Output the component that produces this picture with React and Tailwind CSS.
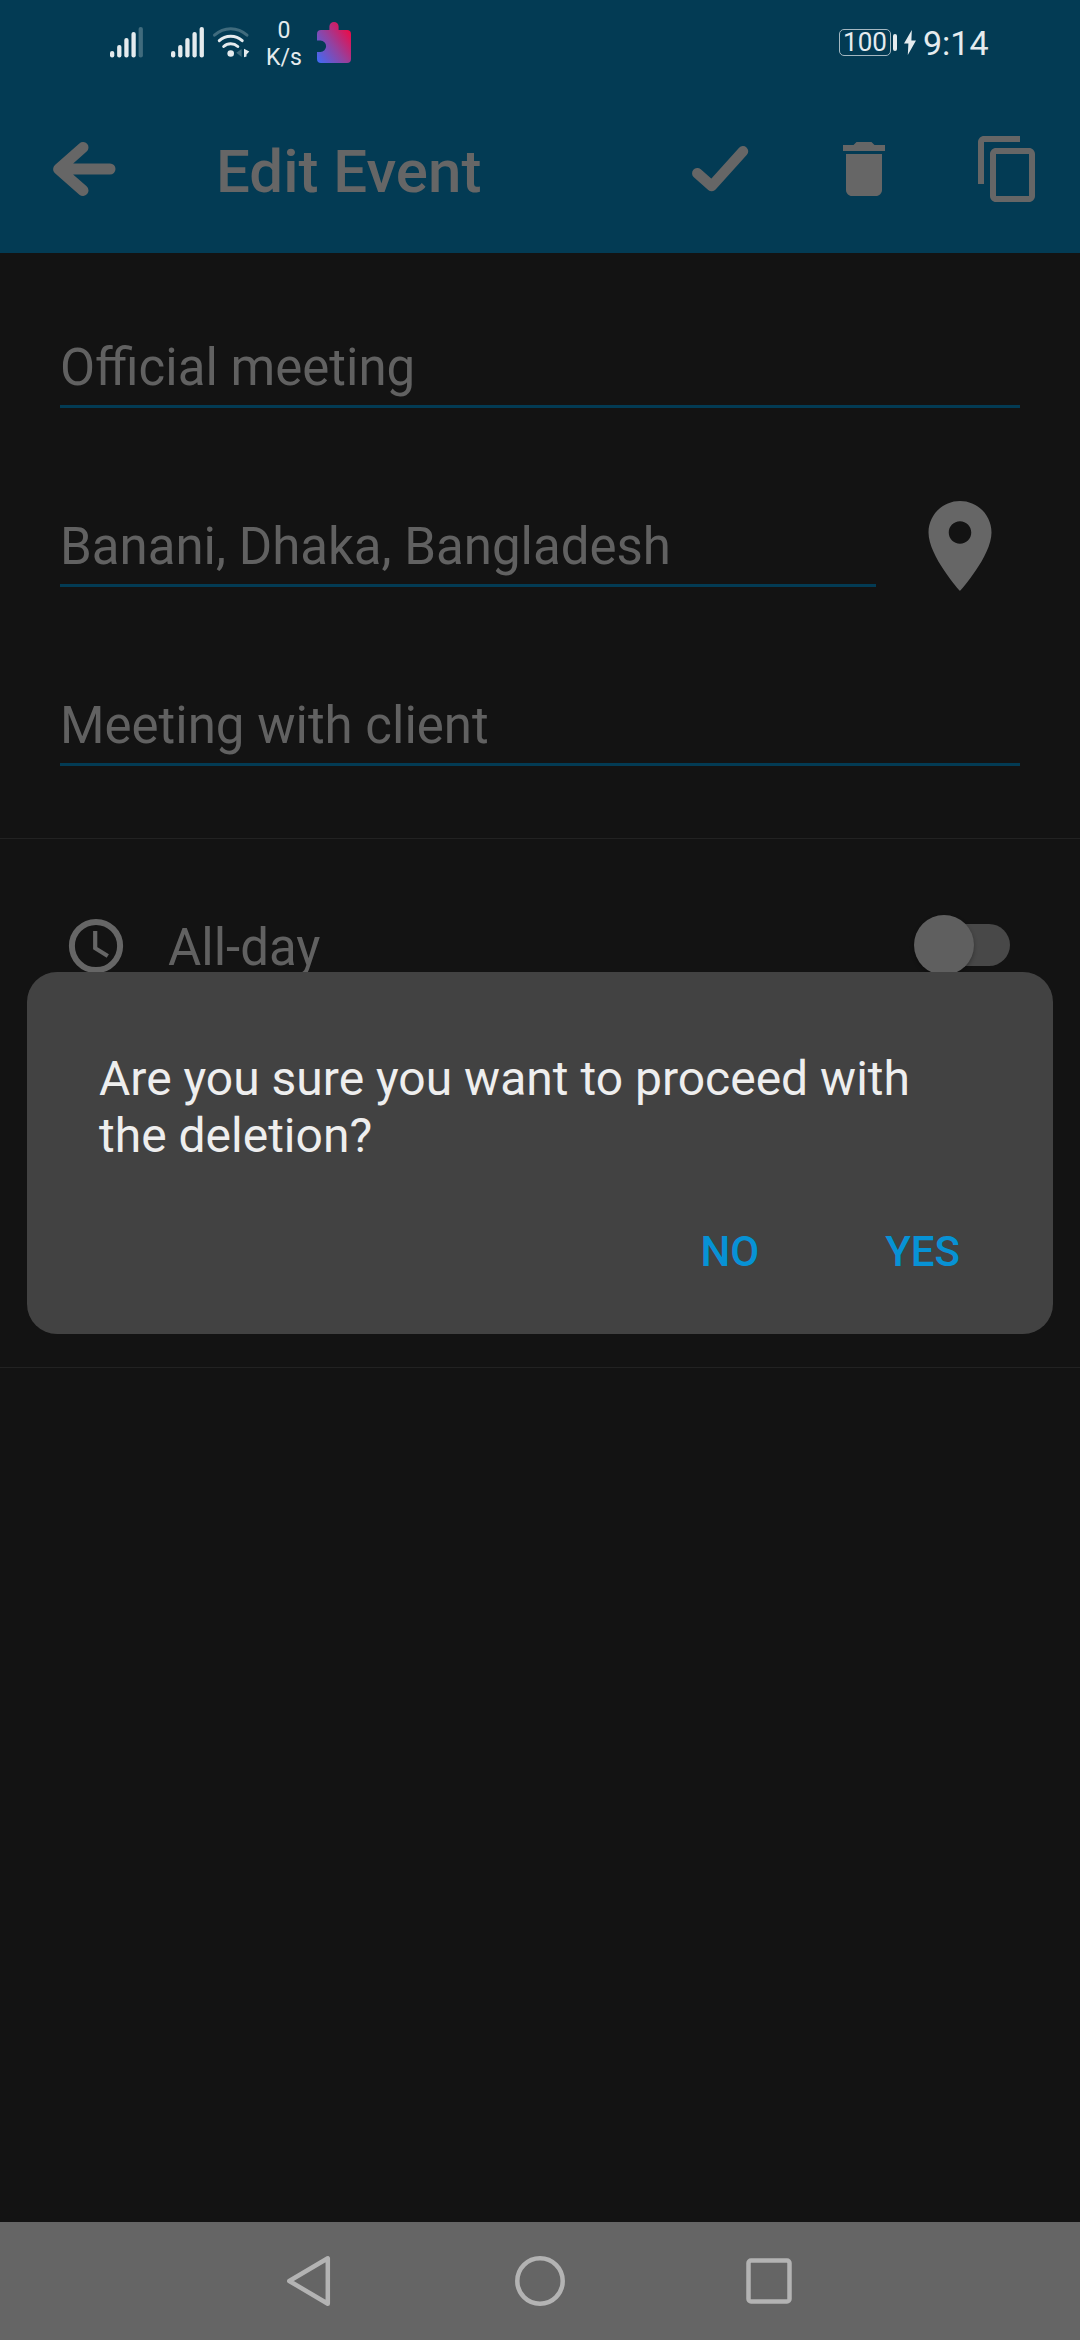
const SIGNAL_TOPS = [24, 18, 11, 5, 0];

function Signal({ level, className }) {
  return (
    <svg className={className} width="33" height="31" viewBox="0 0 33 31" fill="#e5ebee">
      {SIGNAL_TOPS.map((top, i) => (
        <rect key={top} x={i * 7.15} y={top} width="4.3" height={30.5 - top} rx="2.1" opacity={i < level ? 1 : 0.27} />
      ))}
    </svg>
  );
}

function Wifi() {
  return (
    <svg className="ml-[8px]" width="38" height="32" viewBox="0 0 38 32" fill="none" stroke="#e5ebee" strokeWidth="3" strokeLinecap="round">
      <path d="M2.5 9.2Q9.5 2.7 18.7 2.7T35 9.2" opacity="0.27" />
      <path d="M7.3 14.7Q12 10.2 18.7 10.2T30.2 14.7" />
      <path d="M11.7 20.5Q14.6 17.8 18.7 17.8T25.8 20.5" />
      <circle cx="18.7" cy="27.5" r="3.3" fill="#e5ebee" stroke="none" />
      <path d="M24.3 26.8L29.6 23v8z" fill="#e5ebee" stroke="none" opacity="0.27" />
      <path d="M32 22.7L37.3 25.6 34.5 28.5V30.5L32 31.3z" fill="#e5ebee" stroke="none" />
    </svg>
  );
}

function Puzzle() {
  return (
    <svg className="ml-[16px]" width="34" height="41" viewBox="0 0 34 41">
      <defs>
        <linearGradient id="puzzle" x1="0" y1="1" x2="1" y2="0.15">
          <stop offset="0" stopColor="#3d6cf8" />
          <stop offset="0.5" stopColor="#94419f" />
          <stop offset="1" stopColor="#f5063f" />
        </linearGradient>
      </defs>
      <path
        fill="url(#puzzle)"
        d="M4 8H12.4V4.6a4.6 4.6 0 0 1 9.2 0V8H30a4 4 0 0 1 4 4v25a4 4 0 0 1-4 4H4a4 4 0 0 1-4-4V30H3.4a5.7 5.7 0 0 0 0-11.4H0V12a4 4 0 0 1 4-4z"
      />
    </svg>
  );
}

function StatusBar() {
  return (
    <div className="flex h-[85px] items-start text-[#e5ebee]">
      <Signal level={4} className="ml-[110px] mt-[27px]" />
      <Signal level={5} className="ml-[28px] mt-[27px]" />
      <div className="mt-[26px]">
        <Wifi />
      </div>
      <div className="ml-[16px] mt-[17px] w-[36px] text-center text-[23px] leading-[27px]">
        <div>0</div>
        <div>K/s</div>
      </div>
      <div className="mt-[22px] -ml-[1px]">
        <Puzzle />
      </div>
      <div className="ml-auto mt-[29px] flex h-[27px] w-[52px] items-center justify-center rounded-[5px] border border-[#a4b7c1] text-[26px] leading-[27px]">
        100
      </div>
      <div className="ml-[2px] mt-[34px] h-[17px] w-[4px] rounded-[2px] bg-[#e5ebee]" />
      <svg className="ml-[7px] mt-[30px]" width="12" height="25" viewBox="0 0 12 25" fill="#e5ebee">
        <path d="M7.8 0L0 13.6H4.4L3.8 25 12 10.6H7.4z" />
      </svg>
      <div className="ml-[7px] mr-[91px] mt-[23px] w-[66px] whitespace-nowrap text-[34px] leading-[40px]">9:14</div>
    </div>
  );
}

function AppBar() {
  return (
    <div className="flex h-[168px] items-center text-[#666666]">
      <svg className="ml-[48px]" width="72" height="72" viewBox="0 0 72 72" fill="none" stroke="currentColor" strokeWidth="11" strokeLinecap="round" strokeLinejoin="round">
        <path d="M62 36H11M35 14.5L10.6 36.2 35 57.5" />
      </svg>
      <h1 className="ml-[96px] grow pt-[5px] text-[60px] font-medium leading-[72px]">Edit Event</h1>
      <svg width="72" height="72" viewBox="0 0 72 72" fill="none" stroke="currentColor" strokeWidth="10.5" strokeLinecap="round" strokeLinejoin="round">
        <path d="M13.3 40.3L27.7 53 59 18.3" />
      </svg>
      <svg className="ml-[72px]" width="72" height="72" viewBox="0 0 24 24" fill="currentColor">
        <path d="M6 19c0 1.100.9 2 2 2h8c1.100 0 2-.9 2-2V7H6v12zM19 4h-3.500l-1-1h-5l-1 1H5v2h14V4z" />
      </svg>
      <svg className="ml-[72px] mr-[36px]" width="72" height="72" viewBox="0 0 24 24" fill="currentColor">
        <path d="M16 1H4c-1.100 0-2 .9-2 2v14h2V3h12V1zm3 4H8c-1.100 0-2 .9-2 2v14c0 1.100.9 2 2 2h11c1.100 0 2-.9 2-2V7c0-1.100-.9-2-2-2zm0 16H8V7h11v14z" />
      </svg>
    </div>
  );
}

function Field({ children }) {
  return <div className="h-[70px] grow border-b-[3px] border-[#033b54] text-[51px] leading-[60px]">{children}</div>;
}

function Toggle() {
  return (
    <div className="flex h-[60px] w-[96px] items-center">
      <div className="z-10 h-[60px] w-[60px] shrink-0 rounded-full bg-[#5f5f5f] shadow-[0_2px_4px_rgba(0,0,0,0.3)]" />
      <div className="-ml-[40px] h-[42px] w-[76px] shrink-0 rounded-full bg-[#484848]" />
    </div>
  );
}

function EventForm() {
  return (
    <div className="grow text-[#616161]">
      <div className="flex h-[585px] flex-col gap-[109px] px-[60px] pt-[85px]">
        <div className="flex">
          <Field>Official meeting</Field>
        </div>
        <div className="flex h-[70px] items-start">
          <Field>Banani, Dhaka, Bangladesh</Field>
          <svg className="-mt-[25px] ml-[30px] mr-[6px] shrink-0 text-[#666666]" width="108" height="108" viewBox="0 0 24 24" fill="currentColor">
            <path d="M12 2C8.130 2 5 5.130 5 9c0 5.250 7 13 7 13s7-7.750 7-13c0-3.870-3.130-7-7-7zm0 9.500c-1.380 0-2.500-1.120-2.500-2.500s1.120-2.500 2.500-2.500 2.500 1.120 2.500 2.500-1.120 2.500-2.500 2.500z" />
          </svg>
        </div>
        <div className="flex">
          <Field>Meeting with client</Field>
        </div>
      </div>
      <div className="h-[530px] border-y border-[#222222] pt-[76px]">
        <div className="flex h-[60px] items-center pl-[66px] pr-[70px]">
          <svg width="60" height="60" viewBox="0 0 60 60" fill="none" stroke="#666666">
            <circle cx="30" cy="31" r="24.100" strokeWidth="6" />
            <path d="M29.200 16v17.200L41.800 41" strokeWidth="4.200" />
          </svg>
          <div className="ml-[42px] grow pt-[6px] text-[51px] leading-[60px]">All-day</div>
          <Toggle />
        </div>
      </div>
    </div>
  );
}

function NavBar() {
  return (
    <div className="flex h-[118px] items-center justify-center gap-[169px] bg-[#656565]">
      <svg width="60" height="60" viewBox="0 0 60 60" fill="none" stroke="#b3b3b3" strokeWidth="4.500" strokeLinejoin="round">
        <path d="M46.800 7.300v45.400L8.300 30z" />
      </svg>
      <svg width="60" height="60" viewBox="0 0 60 60" fill="none" stroke="#b3b3b3" strokeWidth="4.500">
        <circle cx="30" cy="30" r="22.700" />
      </svg>
      <svg width="60" height="60" viewBox="0 0 60 60" fill="none" stroke="#b3b3b3" strokeWidth="4.500">
        <rect x="9.500" y="9.500" width="41" height="41" rx="2.500" />
      </svg>
    </div>
  );
}

function DeleteDialog() {
  return (
    <div className="absolute left-[27px] top-[972px] z-20 flex h-[362px] w-[1026px] flex-col rounded-[30px] bg-[#424242] px-[72px] pt-[78px]">
      <p className="text-[48px] leading-[57px] text-[#eeeeee]">
        Are you sure you want to proceed with
        <br />
        the deletion?
      </p>
      <div className="mt-[63px] flex justify-end pr-[21px] text-[42px] font-medium leading-[50px] text-[#0792d5]">
        <button className="mr-[126px]">NO</button>
        <button>YES</button>
      </div>
    </div>
  );
}

export default function App() {
  return (
    <div className="relative flex h-[2340px] w-[1080px] flex-col overflow-hidden bg-[#131313] font-['Roboto',sans-serif]">
      <header className="h-[253px] shrink-0 bg-[#033b54]">
        <StatusBar />
        <AppBar />
      </header>
      <EventForm />
      <NavBar />
      <DeleteDialog />
    </div>
  );
}
